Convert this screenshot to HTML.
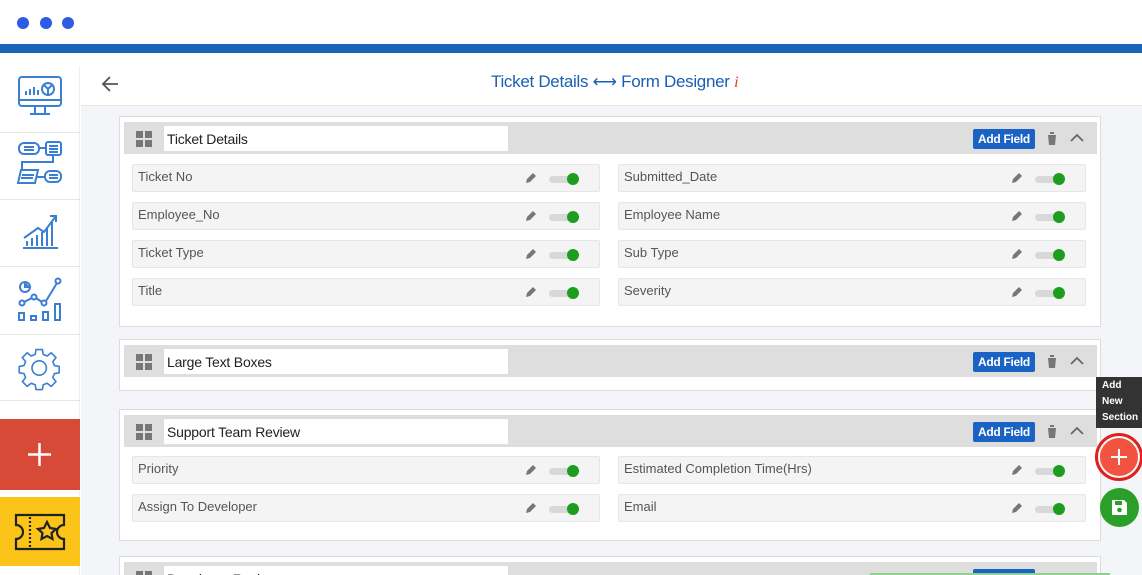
<!DOCTYPE html>
<html style="overflow:hidden"><head><style>
*{box-sizing:border-box;margin:0;padding:0}
html,body{width:1142px;height:575px;overflow:hidden}
body{background:#fff;font-family:"Liberation Sans",sans-serif;position:relative}
svg{overflow:visible}
.abs{position:absolute}
.dot{position:absolute;top:17px;width:12px;height:12px;border-radius:50%;background:#2d5be3}
.side{left:0;top:66px;width:80px;height:509px;background:#fff;border-right:1px solid #eee}
.sep{position:absolute;left:0;width:80px;height:1px;background:#e6e6e6}
.main{left:81px;top:66px;width:1061px;height:509px;background:#f3f5f9}
.sec{position:absolute;left:119px;width:982px;background:#fff;border:1px solid #dcdcdc}
.sh{position:absolute;left:4px;top:5px;width:973px;height:32px;background:#dedede}
.grid{position:absolute;left:12px;top:9px;width:16px;height:16px}
.grid i{position:absolute;width:7px;height:7px;background:#777}
.ti{position:absolute;left:40px;top:4px;width:344px;height:25px;background:#fff;font-size:14px;color:#222;padding:5px 3px;letter-spacing:-0.2px}
.af{position:absolute;left:849px;top:7px;background:#1a62c4;color:#fff;font-size:12px;font-weight:bold;padding:3px 5px;border-radius:2px;letter-spacing:-0.3px}
.tr{position:absolute;left:922px;top:9px}
.up{position:absolute;left:946px;top:11px}
.f{position:absolute;width:468px;height:28px;background:#f4f4f4;border:1px solid #e6e6e6;border-radius:2px;font-size:13px;color:#555;padding:4px 5px}
.pen{position:absolute;right:62px;top:7px}
.tg{position:absolute;right:24px;top:11px;width:26px;height:7px;background:#d8d8d8;border-radius:4px}
.tg:after{content:"";position:absolute;right:-4px;top:-3px;width:12px;height:12px;border-radius:50%;background:#1e9e1e}
</style></head><body>
<div class="dot" style="left:17px"></div><div class="dot" style="left:40px"></div><div class="dot" style="left:62px"></div>
<div class="abs" style="left:0;top:44px;width:1142px;height:9px;background:#1a66b8"></div>
<div class="abs side">
<svg class="abs" style="left:17px;top:9px" width="46" height="44" viewBox="0 0 46 44" fill="none" stroke="#3b7fd4" stroke-width="2"><rect x="2" y="2" width="42" height="29" rx="3"/><line x1="2" y1="25" x2="44" y2="25"/><path d="M18 31v7M28 31v7M13 39h20"/><path d="M9 20v-4M13 20v-6M17 20v-8M21 20v-5"/><circle cx="31" cy="14" r="6"/><path d="M31 14l-4-4M31 14l4-4M31 14v6"/></svg>
<div class="sep" style="top:66px"></div>
<svg class="abs" style="left:16px;top:74px" width="48" height="48" viewBox="0 0 48 48" fill="none" stroke="#3b7fd4" stroke-width="2"><rect x="3" y="3" width="20" height="11" rx="5"/><path d="M8 7h10M8 10h10"/><rect x="30" y="2" width="15" height="13" rx="2"/><path d="M33 6h9M33 9h9M33 12h9M23 8h7M37 15v7H6v9"/><path d="M5 30h17l-3 13H2z"/><path d="M6 35h12M5 38h12"/><rect x="29" y="31" width="16" height="11" rx="5"/><path d="M33 35h9M33 38h9M20 37h9"/></svg>
<div class="sep" style="top:133px"></div>
<svg class="abs" style="left:20px;top:145px" width="40" height="40" viewBox="0 0 40 40" fill="none" stroke="#3b7fd4" stroke-width="2"><path d="M3 37h35"/><path d="M7 35v-5M12 35v-8M17 35v-11M22 35v-14M27 35v-18M32 35v-24"/><path d="M4 27l14-10 6 4L36 5M30 5h6v6"/></svg>
<div class="sep" style="top:200px"></div>
<svg class="abs" style="left:17px;top:212px" width="46" height="46" viewBox="0 0 46 46" fill="none" stroke="#3b7fd4" stroke-width="2"><circle cx="8" cy="9" r="5"/><path d="M8 4v5h5" fill="#3b7fd4"/><circle cx="5" cy="25" r="2.5"/><circle cx="17" cy="19" r="2.5"/><circle cx="27" cy="25" r="2.5"/><circle cx="41" cy="3" r="2.5"/><path d="M7 24l8-4M19 20l6 4M29 23l11-18"/><rect x="2" y="35" width="5" height="7"/><rect x="14" y="38" width="5" height="4"/><rect x="26" y="34" width="5" height="8"/><rect x="38" y="26" width="5" height="16"/></svg>
<div class="sep" style="top:268px"></div>
<svg class="abs" style="left:16px;top:278px" width="48" height="48" viewBox="0 0 48 48" fill="none" stroke="#3b7fd4" stroke-width="2"><g transform="translate(24 24) scale(0.8) translate(-24 -26)"><path d="M19 3h8l1 6 5 2 5-4 6 6-4 5 2 5 6 1v8l-6 1-2 5 4 5-6 6-5-4-5 2-1 6h-8l-1-6-5-2-5 4-6-6 4-5-2-5-6-1v-8l6-1 2-5-4-5 6-6 5 4 5-2z" stroke-linejoin="round"/><circle cx="23" cy="26" r="9"/></g></svg>
<div class="sep" style="top:334px"></div>
<div class="abs" style="left:0;top:353px;width:80px;height:71px;background:#d84a38"><svg class="abs" style="left:27px;top:23px" width="25" height="25"><path d="M12.5 1v23M1 12.5h23" stroke="#fff" stroke-width="2.5"/></svg></div>
<div class="abs" style="left:0;top:431px;width:80px;height:69px;background:#fcc419"><svg class="abs" style="left:14px;top:16px" width="52" height="38" viewBox="0 0 52 38" fill="none" stroke="#222" stroke-width="2.2"><path d="M2 2h48v10a6 6 0 0 0 0 14v10H2V26a6 6 0 0 0 0-14z"/><path d="M16 4v30" stroke-dasharray="2 2"/><path d="M33 9l3 6 6 1-4.5 4 1 6-5.5-3-5.5 3 1-6-4.5-4 6-1z"/></svg></div>
</div>
<div class="abs main"></div>
<div class="abs" style="left:81px;top:66px;width:1061px;height:40px;background:#fff;border-bottom:1px solid #e6e6e6"></div>
<svg class="abs" style="left:100px;top:75px" width="20" height="18"><path d="M18 9H3M10 2L3 9l7 7" fill="none" stroke="#555" stroke-width="1.8"/></svg>
<div class="abs" style="left:491px;top:72px;font-size:17px;color:#1a5fb0;letter-spacing:-0.3px">Ticket Details ⟷ Form Designer <span style="color:#e03c28;font-style:italic;font-family:'Liberation Serif';font-size:16px">i</span></div>

<div class="sec" style="top:116px;height:211px">
<div class="sh"><div class="grid"><i style="left:0;top:0"></i><i style="left:9px;top:0"></i><i style="left:0;top:9px"></i><i style="left:9px;top:9px"></i></div><div class="ti">Ticket Details</div><div class="af">Add Field</div>
<svg class="tr" width="12" height="15"><path d="M1 3h10M4 3V1h4v2M2 4h8l-1 10H3z" fill="#777"/></svg><svg class="up" width="14" height="10"><path d="M1 8l6-6 6 6" fill="none" stroke="#666" stroke-width="1.8"/></svg></div>
<div class="f" style="left:12px;top:47px">Ticket No<svg class="pen" width="12" height="12"><path d="M1 11l1-4 6-6 3 3-6 6z" fill="#777"/></svg><div class="tg"></div></div>
<div class="f" style="left:498px;top:47px">Submitted_Date<svg class="pen" width="12" height="12"><path d="M1 11l1-4 6-6 3 3-6 6z" fill="#777"/></svg><div class="tg"></div></div>
<div class="f" style="left:12px;top:85px">Employee_No<svg class="pen" width="12" height="12"><path d="M1 11l1-4 6-6 3 3-6 6z" fill="#777"/></svg><div class="tg"></div></div>
<div class="f" style="left:498px;top:85px">Employee Name<svg class="pen" width="12" height="12"><path d="M1 11l1-4 6-6 3 3-6 6z" fill="#777"/></svg><div class="tg"></div></div>
<div class="f" style="left:12px;top:123px">Ticket Type<svg class="pen" width="12" height="12"><path d="M1 11l1-4 6-6 3 3-6 6z" fill="#777"/></svg><div class="tg"></div></div>
<div class="f" style="left:498px;top:123px">Sub Type<svg class="pen" width="12" height="12"><path d="M1 11l1-4 6-6 3 3-6 6z" fill="#777"/></svg><div class="tg"></div></div>
<div class="f" style="left:12px;top:161px">Title<svg class="pen" width="12" height="12"><path d="M1 11l1-4 6-6 3 3-6 6z" fill="#777"/></svg><div class="tg"></div></div>
<div class="f" style="left:498px;top:161px">Severity<svg class="pen" width="12" height="12"><path d="M1 11l1-4 6-6 3 3-6 6z" fill="#777"/></svg><div class="tg"></div></div>
</div>

<div class="sec" style="top:339px;height:52px">
<div class="sh"><div class="grid"><i style="left:0;top:0"></i><i style="left:9px;top:0"></i><i style="left:0;top:9px"></i><i style="left:9px;top:9px"></i></div><div class="ti">Large Text Boxes</div><div class="af">Add Field</div>
<svg class="tr" width="12" height="15"><path d="M1 3h10M4 3V1h4v2M2 4h8l-1 10H3z" fill="#777"/></svg><svg class="up" width="14" height="10"><path d="M1 8l6-6 6 6" fill="none" stroke="#666" stroke-width="1.8"/></svg></div>
</div>

<div class="sec" style="top:409px;height:132px">
<div class="sh"><div class="grid"><i style="left:0;top:0"></i><i style="left:9px;top:0"></i><i style="left:0;top:9px"></i><i style="left:9px;top:9px"></i></div><div class="ti">Support Team Review</div><div class="af">Add Field</div>
<svg class="tr" width="12" height="15"><path d="M1 3h10M4 3V1h4v2M2 4h8l-1 10H3z" fill="#777"/></svg><svg class="up" width="14" height="10"><path d="M1 8l6-6 6 6" fill="none" stroke="#666" stroke-width="1.8"/></svg></div>
<div class="f" style="left:12px;top:46px">Priority<svg class="pen" width="12" height="12"><path d="M1 11l1-4 6-6 3 3-6 6z" fill="#777"/></svg><div class="tg"></div></div>
<div class="f" style="left:498px;top:46px">Estimated Completion Time(Hrs)<svg class="pen" width="12" height="12"><path d="M1 11l1-4 6-6 3 3-6 6z" fill="#777"/></svg><div class="tg"></div></div>
<div class="f" style="left:12px;top:84px">Assign To Developer<svg class="pen" width="12" height="12"><path d="M1 11l1-4 6-6 3 3-6 6z" fill="#777"/></svg><div class="tg"></div></div>
<div class="f" style="left:498px;top:84px">Email<svg class="pen" width="12" height="12"><path d="M1 11l1-4 6-6 3 3-6 6z" fill="#777"/></svg><div class="tg"></div></div>
</div>

<div class="sec" style="top:556px;height:19px;border-bottom:none;overflow:hidden">
<div class="sh"><div class="grid"><i style="left:0;top:0"></i><i style="left:9px;top:0"></i><i style="left:0;top:9px"></i><i style="left:9px;top:9px"></i></div><div class="ti">Developer Review</div><div class="af">Add Field</div></div>
</div>
<div class="abs" style="left:870px;top:573px;width:240px;height:2px;background:#8fd18f"></div>

<div class="abs" style="left:1096px;top:377px;width:46px;height:51px;background:#333;color:#fff;font-size:10px;font-weight:bold;line-height:16px;padding:1px 0 0 6px">Add<br>New<br>Section</div>
<div class="abs" style="left:1095px;top:433px;width:48px;height:48px;border-radius:50%;border:3px solid #e0201a"></div>
<div class="abs" style="left:1100px;top:438px;width:38px;height:38px;border-radius:50%;background:#f0533f"><svg class="abs" style="left:11px;top:11px" width="16" height="16"><path d="M8 0v16M0 8h16" stroke="#fff" stroke-width="2"/></svg></div>
<div class="abs" style="left:1100px;top:488px;width:39px;height:39px;border-radius:50%;background:#2aa02a"><svg class="abs" style="left:11px;top:11px" width="17" height="17" viewBox="0 0 17 17"><path d="M1 1h12l3 3v12H1z" fill="#fff"/><rect x="4" y="2" width="7" height="4" fill="#2aa02a"/><circle cx="8.5" cy="11" r="2.3" fill="#2aa02a"/></svg></div>
</body></html>
